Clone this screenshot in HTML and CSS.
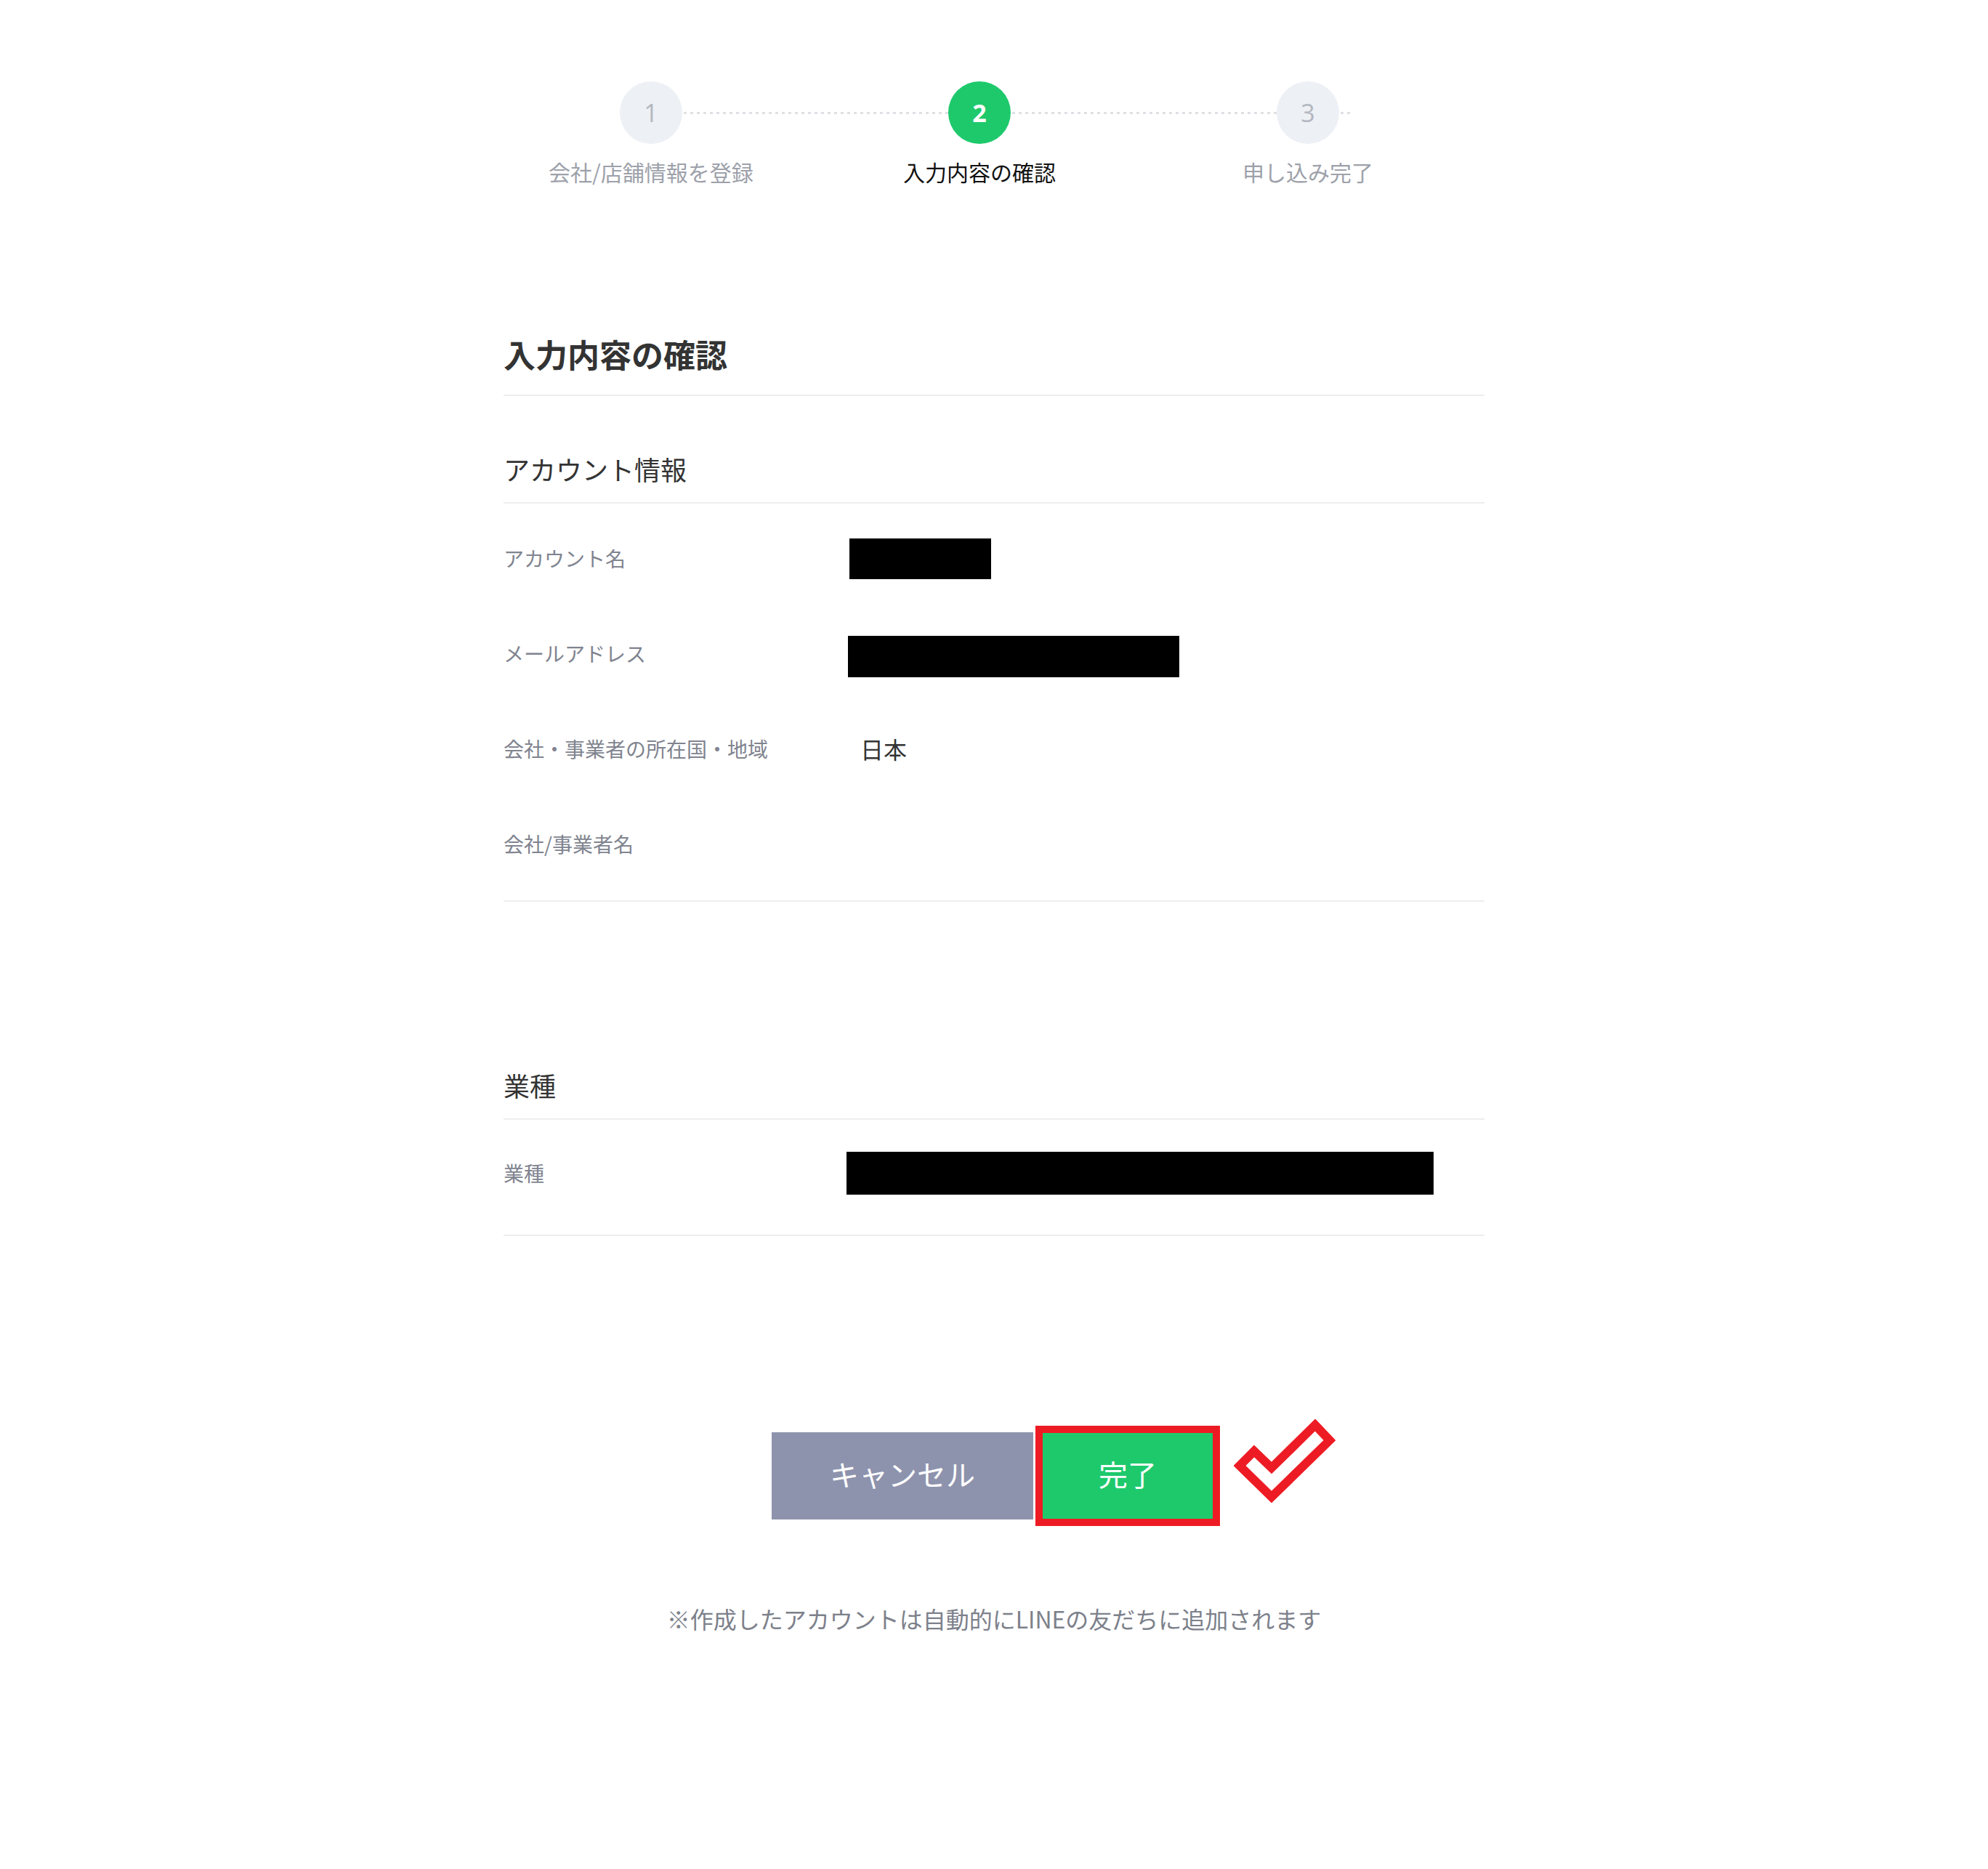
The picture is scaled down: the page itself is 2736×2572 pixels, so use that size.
FILE: index.html
```html
<!DOCTYPE html>
<html lang="ja">
<head>
<meta charset="utf-8">
<title>入力内容の確認</title>
<link rel="stylesheet" href="styles.css">
</head>
<body>
<div class="page">
  <ol class="stepper">
    <li class="step">
      <span class="step-circle">1</span>
      <span class="step-label">会社/店舗情報を登録</span>
    </li>
    <li class="step step-active">
      <span class="step-circle">2</span>
      <span class="step-label">入力内容の確認</span>
    </li>
    <li class="step step-last">
      <span class="step-circle">3</span>
      <span class="step-label">申し込み完了</span>
    </li>
  </ol>

  <main class="content">
    <h1 class="page-title">入力内容の確認</h1>

    <section class="section">
      <h2 class="section-title">アカウント情報</h2>
      <dl class="rows rows-account">
        <div class="row">
          <dt class="row-label">アカウント名</dt>
          <dd class="row-value"><span class="redact redact-name"></span></dd>
        </div>
        <div class="row">
          <dt class="row-label">メールアドレス</dt>
          <dd class="row-value"><span class="redact redact-mail"></span></dd>
        </div>
        <div class="row">
          <dt class="row-label">会社・事業者の所在国・地域</dt>
          <dd class="row-value row-text">日本</dd>
        </div>
        <div class="row">
          <dt class="row-label">会社/事業者名</dt>
          <dd class="row-value"></dd>
        </div>
      </dl>
    </section>

    <section class="section section-industry">
      <h2 class="section-title">業種</h2>
      <dl class="rows rows-industry">
        <div class="row">
          <dt class="row-label">業種</dt>
          <dd class="row-value"><span class="redact redact-industry"></span></dd>
        </div>
      </dl>
    </section>

    <div class="actions">
      <button class="btn btn-cancel" type="button">キャンセル</button>
      <button class="btn btn-done" type="button">完了</button>
      <svg class="checkmark" viewBox="0 0 140 115" width="140" height="115" aria-hidden="true">
        <polygon points="8,64 28,44 52,67 112,8 132,29 52,107" fill="none" stroke="#ed1c24" stroke-width="12" stroke-linejoin="miter"/>
      </svg>
    </div>

    <p class="note">※作成したアカウントは自動的にLINEの友だちに追加されます</p>
  </main>
</div>
</body>
</html>
```

FILE: styles.css
```css
* {
  box-sizing: border-box;
}

html, body {
  margin: 0;
  padding: 0;
  background: #ffffff;
}

body {
  font-family: "Noto Sans CJK JP", "Noto Sans", sans-serif;
  color: #333333;
}

.page {
  padding-top: 112px;
  padding-bottom: 200px;
}

/* Stepper */
.stepper {
  list-style: none;
  margin: 0 auto;
  padding: 0 40px 0 0;
  width: 1396px;
  display: grid;
  grid-template-columns: repeat(3, 452px);
}

.step {
  position: relative;
  display: flex;
  flex-direction: column;
  align-items: center;
}

.step::after {
  content: "";
  position: absolute;
  left: 50%;
  top: 42px;
  width: 452px;
  height: 3px;
  background-image: repeating-linear-gradient(to right, #dfe0e4 0, #dfe0e4 4px, transparent 4px, transparent 9px);
  z-index: 0;
}

.step-last::after {
  width: 60px;
}

.step-circle {
  position: relative;
  z-index: 1;
  width: 86px;
  height: 86px;
  border-radius: 50%;
  background: #edf0f5;
  color: #b3b7bf;
  font-family: "Open Sans", "Noto Sans", sans-serif;
  font-size: 34px;
  line-height: 86px;
  text-align: center;
}

.step-label {
  margin-top: 16px;
  font-size: 30px;
  line-height: 44px;
  color: #9da1aa;
  white-space: nowrap;
}

.step-active .step-circle {
  background: #1ec96c;
  color: #ffffff;
  font-weight: 700;
}

.step-active .step-label {
  color: #111111;
}

/* Content */
.content {
  width: 1350px;
  margin: 0 auto;
}

.page-title {
  margin: 199px 0 0;
  padding-bottom: 26px;
  font-size: 44px;
  line-height: 60px;
  font-weight: 700;
  color: #333333;
  border-bottom: 2px solid #eeeeee;
}

.section-title {
  margin: 75px 0 0;
  padding-bottom: 21px;
  font-size: 36px;
  line-height: 50px;
  font-weight: 400;
  color: #333333;
  border-bottom: 2px solid #eeeeee;
}

.section-industry .section-title {
  margin-top: 227px;
}

.rows {
  margin: 0;
  border-bottom: 2px solid #eeeeee;
}

.rows-account {
  padding: 10px 0 12px;
}

.rows-industry {
  padding: 8px 0 19px;
}

.row {
  display: flex;
  align-items: center;
  height: 131px;
}

.row-label {
  width: 474px;
  flex: none;
  font-size: 28px;
  line-height: 40px;
  padding-bottom: 2px;
  color: #80848f;
}

.row-value {
  margin: 0;
  flex: 1;
  display: flex;
  align-items: center;
}

.row-text {
  padding-left: 17px;
  padding-bottom: 2px;
  font-size: 32px;
  line-height: 44px;
  color: #333333;
}

.redact {
  display: block;
  background: #000000;
}

.redact-name {
  width: 195px;
  height: 56px;
  margin-left: 2px;
}

.redact-mail {
  width: 456px;
  height: 57px;
  margin-top: 7px;
}

.redact-industry {
  width: 808px;
  height: 59px;
  margin-left: -2px;
}

/* Actions */
.actions {
  position: relative;
  margin-top: 261px;
  display: flex;
  justify-content: center;
  align-items: center;
  gap: 3px;
  padding-left: 5px;
}

.btn {
  border: none;
  margin: 0;
  padding: 0 0 6px;
  font-family: "Noto Sans CJK JP", "Noto Sans", sans-serif;
  font-size: 40px;
  color: #ffffff;
  cursor: pointer;
}

.btn-cancel {
  width: 360px;
  height: 120px;
  background: #8e93ad;
}

.btn-done {
  width: 254px;
  height: 138px;
  background: #1ec96c;
  border: 10px solid #ed1c24;
}

.checkmark {
  position: absolute;
  left: 1005px;
  top: -9px;
  display: block;
}

.note {
  margin: 105px 0 0;
  text-align: center;
  font-size: 32px;
  line-height: 44px;
  color: #7d818b;
}
```
